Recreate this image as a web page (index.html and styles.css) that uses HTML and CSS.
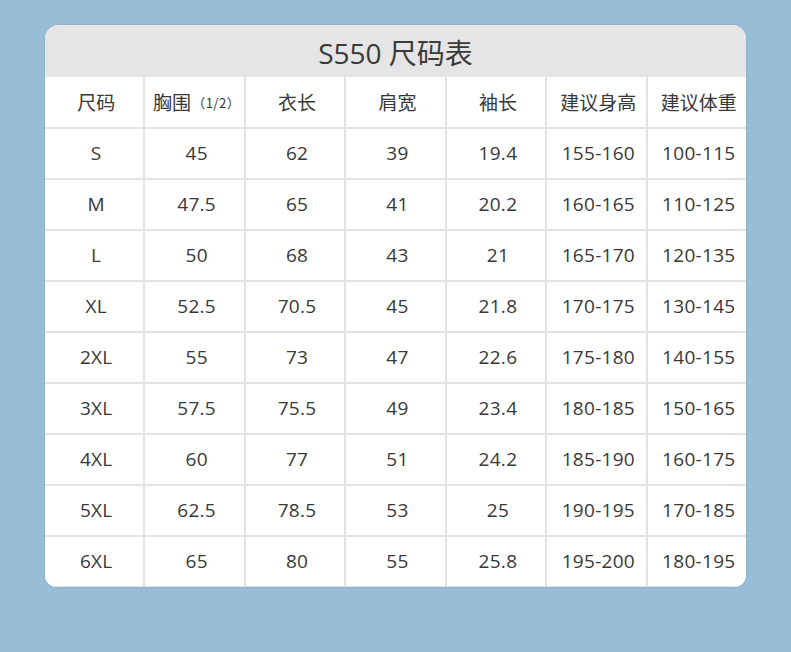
FILE: index.html
```html
<!DOCTYPE html>
<html lang="zh-CN">
<head>
<meta charset="utf-8">
<title>S550 尺码表</title>
<link rel="stylesheet" href="styles.css">
</head>
<body>
<div class="card">
  <div class="title">S550 尺码表</div>
  <div class="grid">
    <div class="cell head">尺码</div>
    <div class="cell head">胸围<span class="half">（1/2）</span></div>
    <div class="cell head">衣长</div>
    <div class="cell head">肩宽</div>
    <div class="cell head">袖长</div>
    <div class="cell head">建议身高</div>
    <div class="cell head">建议体重</div>

    <div class="cell">S</div><div class="cell">45</div><div class="cell">62</div><div class="cell">39</div><div class="cell">19.4</div><div class="cell">155-160</div><div class="cell">100-115</div>
    <div class="cell">M</div><div class="cell">47.5</div><div class="cell">65</div><div class="cell">41</div><div class="cell">20.2</div><div class="cell">160-165</div><div class="cell">110-125</div>
    <div class="cell">L</div><div class="cell">50</div><div class="cell">68</div><div class="cell">43</div><div class="cell">21</div><div class="cell">165-170</div><div class="cell">120-135</div>
    <div class="cell">XL</div><div class="cell">52.5</div><div class="cell">70.5</div><div class="cell">45</div><div class="cell">21.8</div><div class="cell">170-175</div><div class="cell">130-145</div>
    <div class="cell">2XL</div><div class="cell">55</div><div class="cell">73</div><div class="cell">47</div><div class="cell">22.6</div><div class="cell">175-180</div><div class="cell">140-155</div>
    <div class="cell">3XL</div><div class="cell">57.5</div><div class="cell">75.5</div><div class="cell">49</div><div class="cell">23.4</div><div class="cell">180-185</div><div class="cell">150-165</div>
    <div class="cell">4XL</div><div class="cell">60</div><div class="cell">77</div><div class="cell">51</div><div class="cell">24.2</div><div class="cell">185-190</div><div class="cell">160-175</div>
    <div class="cell">5XL</div><div class="cell">62.5</div><div class="cell">78.5</div><div class="cell">53</div><div class="cell">25</div><div class="cell">190-195</div><div class="cell">170-185</div>
    <div class="cell">6XL</div><div class="cell">65</div><div class="cell">80</div><div class="cell">55</div><div class="cell">25.8</div><div class="cell">195-200</div><div class="cell">180-195</div>
  </div>
</div>
</body>
</html>
```

FILE: styles.css
```css
html, body {
  margin: 0;
  padding: 0;
  background: #98bed6;
}
body {
  width: 791px;
  height: 652px;
  padding: 25px 0 0 45px;
  box-sizing: border-box;
  font-family: "Open Sans", "Noto Sans CJK SC", sans-serif;
  color: #383838;
}
.card {
  width: 701px;
  background: #fff;
  border-radius: 14px 14px 12px 12px;
  overflow: hidden;
  box-shadow: 0 0 2px rgba(0, 0, 0, 0.18);
}
.title {
  height: 52px;
  background: #e5e5e5;
  display: flex;
  align-items: center;
  justify-content: center;
  font-size: 28px;
  color: #3a3a3a;
  padding-top: 1px;
  box-sizing: border-box;
}
.grid {
  display: grid;
  grid-template-columns: repeat(7, 1fr);
  grid-template-rows: 50px repeat(9, 49px);
  gap: 2px;
  background: #e3e3e3;
  padding-bottom: 1px;
}
.cell {
  background: #fff;
  display: flex;
  align-items: center;
  justify-content: center;
  font-size: 19px;
  letter-spacing: 0.3px;
  padding-left: 4px;
  padding-bottom: 2px;
}
.head {
  font-family: "Noto Sans CJK SC", sans-serif;
  font-size: 19px;
  letter-spacing: 0;
}
.half {
  font-family: "Noto Sans CJK SC", sans-serif;
  font-size: 13px;
  letter-spacing: 0.5px;
  margin-top: 3px;
  margin-left: 1px;
}
```
